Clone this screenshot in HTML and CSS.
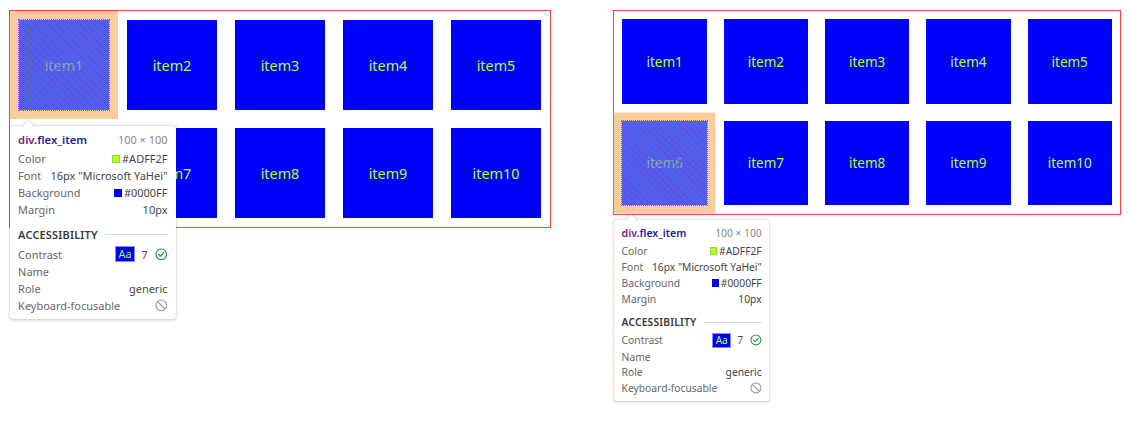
FILE: index.html
```html
<!DOCTYPE html>
<html lang="en">
<head>
<meta charset="utf-8">
<title>Flex items</title>
<link rel="stylesheet" href="styles.css">
</head>
<body>
<div class="stage">
  <div class="demo demo--left">
    <div class="flex_container">
      <div class="flex_item is-inspected"><span class="label">item1</span>
        <div class="tooltip">
          <div class="tt-title"><span class="tt-sel"><span class="tt-tag">div</span><span class="tt-cls">.flex_item</span></span><span class="tt-dim">100 × 100</span></div>
          <div class="tt-row"><span class="tt-key">Color</span><span class="tt-val"><i class="swatch swatch--green"></i>#ADFF2F</span></div>
          <div class="tt-row"><span class="tt-key">Font</span><span class="tt-val">16px "Microsoft YaHei"</span></div>
          <div class="tt-row"><span class="tt-key">Background</span><span class="tt-val"><i class="swatch swatch--blue"></i>#0000FF</span></div>
          <div class="tt-row"><span class="tt-key">Margin</span><span class="tt-val">10px</span></div>
          <div class="tt-section"><span>ACCESSIBILITY</span><i class="tt-rule"></i></div>
          <div class="tt-row tt-row--contrast"><span class="tt-key">Contrast</span><span class="tt-val"><span class="aa">Aa</span><span class="ratio">7</span><svg class="ico" viewBox="0 0 14 14" width="14" height="14"><circle cx="7" cy="7" r="5.9" fill="none" stroke="#1f9d3a" stroke-width="1.3"/><path d="M4.3 7.2 L6.2 9.1 L9.8 5.2" fill="none" stroke="#1f9d3a" stroke-width="1.4" stroke-linecap="round" stroke-linejoin="round"/></svg></span></div>
          <div class="tt-row"><span class="tt-key">Name</span><span class="tt-val"></span></div>
          <div class="tt-row"><span class="tt-key">Role</span><span class="tt-val">generic</span></div>
          <div class="tt-row"><span class="tt-key">Keyboard-focusable</span><span class="tt-val"><svg class="ico" viewBox="0 0 14 14" width="14" height="14"><circle cx="7" cy="7" r="5.9" fill="none" stroke="#9a9a9a" stroke-width="1.3"/><path d="M2.9 2.9 L11.1 11.1" stroke="#9a9a9a" stroke-width="1.3"/></svg></span></div>
        </div>
      </div>
      <div class="flex_item"><span class="label">item2</span></div>
      <div class="flex_item"><span class="label">item3</span></div>
      <div class="flex_item"><span class="label">item4</span></div>
      <div class="flex_item"><span class="label">item5</span></div>
      <div class="flex_item"><span class="label">item6</span></div>
      <div class="flex_item"><span class="label">item7</span></div>
      <div class="flex_item"><span class="label">item8</span></div>
      <div class="flex_item"><span class="label">item9</span></div>
      <div class="flex_item"><span class="label">item10</span></div>
    </div>
  </div>

  <div class="demo demo--right">
    <div class="flex_container">
      <div class="flex_item"><span class="label">item1</span></div>
      <div class="flex_item"><span class="label">item2</span></div>
      <div class="flex_item"><span class="label">item3</span></div>
      <div class="flex_item"><span class="label">item4</span></div>
      <div class="flex_item"><span class="label">item5</span></div>
      <div class="flex_item is-inspected"><span class="label">item6</span>
        <div class="tooltip">
          <div class="tt-title"><span class="tt-sel"><span class="tt-tag">div</span><span class="tt-cls">.flex_item</span></span><span class="tt-dim">100 × 100</span></div>
          <div class="tt-row"><span class="tt-key">Color</span><span class="tt-val"><i class="swatch swatch--green"></i>#ADFF2F</span></div>
          <div class="tt-row"><span class="tt-key">Font</span><span class="tt-val">16px "Microsoft YaHei"</span></div>
          <div class="tt-row"><span class="tt-key">Background</span><span class="tt-val"><i class="swatch swatch--blue"></i>#0000FF</span></div>
          <div class="tt-row"><span class="tt-key">Margin</span><span class="tt-val">10px</span></div>
          <div class="tt-section"><span>ACCESSIBILITY</span><i class="tt-rule"></i></div>
          <div class="tt-row tt-row--contrast"><span class="tt-key">Contrast</span><span class="tt-val"><span class="aa">Aa</span><span class="ratio">7</span><svg class="ico" viewBox="0 0 14 14" width="14" height="14"><circle cx="7" cy="7" r="5.9" fill="none" stroke="#1f9d3a" stroke-width="1.3"/><path d="M4.3 7.2 L6.2 9.1 L9.8 5.2" fill="none" stroke="#1f9d3a" stroke-width="1.4" stroke-linecap="round" stroke-linejoin="round"/></svg></span></div>
          <div class="tt-row"><span class="tt-key">Name</span><span class="tt-val"></span></div>
          <div class="tt-row"><span class="tt-key">Role</span><span class="tt-val">generic</span></div>
          <div class="tt-row"><span class="tt-key">Keyboard-focusable</span><span class="tt-val"><svg class="ico" viewBox="0 0 14 14" width="14" height="14"><circle cx="7" cy="7" r="5.9" fill="none" stroke="#9a9a9a" stroke-width="1.3"/><path d="M2.9 2.9 L11.1 11.1" stroke="#9a9a9a" stroke-width="1.3"/></svg></span></div>
        </div>
      </div>
      <div class="flex_item"><span class="label">item7</span></div>
      <div class="flex_item"><span class="label">item8</span></div>
      <div class="flex_item"><span class="label">item9</span></div>
      <div class="flex_item"><span class="label">item10</span></div>
    </div>
  </div>
</div>
</body>
</html>
```

FILE: styles.css
```css
html, body {
  margin: 0;
  padding: 0;
  background: #fff;
}

.stage {
  display: flex;
  align-items: flex-start;
  gap: 62px;
  padding: 10px 0 0 9px;
  min-height: 411px;
}

.demo--left { zoom: 0.9; }
.demo--right { zoom: 0.844; }

.flex_container {
  display: flex;
  flex-wrap: wrap;
  width: 600px;
  border: 1px solid #ff4040;
  position: relative;
}

.flex_item {
  position: relative;
  width: 100px;
  height: 100px;
  margin: 10px;
  background: #0000ff;
  color: #adff2f;
  font-family: "Noto Sans", "Open Sans", sans-serif;
  font-size: 16px;
  display: flex;
  align-items: center;
  justify-content: center;
}

/* DevTools highlight: content box + margin box */
.is-inspected::before {
  content: "";
  position: absolute;
  inset: 0;
  background: rgba(112, 138, 222, 0.7);
  outline: 1px dotted #a040ff;
  outline-offset: -1px;
  box-shadow: 0 0 0 10px rgba(246, 178, 107, 0.66);
}

/* flex item hatch (dashed diagonal lines) */
.is-inspected::after {
  content: "";
  position: absolute;
  inset: 1px;
  background: repeating-linear-gradient(45deg, transparent 0 4.6px, rgba(135, 45, 225, 0.6) 4.6px 6px);
  -webkit-mask-image: repeating-linear-gradient(-45deg, #000 0 3px, transparent 3px 5px);
  mask-image: repeating-linear-gradient(-45deg, #000 0 3px, transparent 3px 5px);
}

/* Inspector tooltip */
.tooltip {
  position: absolute;
  z-index: 10;
  left: -10px;
  top: 118px;
  width: 184px;
  box-sizing: border-box;
  padding: 4px 9px 6px;
  background: #fff;
  border-radius: 3px;
  box-shadow: 0 0 1px rgba(0, 0, 0, 0.3), 0 1px 4px rgba(0, 0, 0, 0.2);
  font-family: "Noto Sans", "Open Sans", sans-serif;
  font-size: 12.2px;
  color: #444;
  text-align: left;
}

.tooltip::before {
  content: "";
  position: absolute;
  left: 15px;
  top: -5px;
  width: 10px;
  height: 10px;
  background: #fff;
  transform: rotate(45deg);
  box-shadow: 0 0 1px rgba(0, 0, 0, 0.3), 0 0 3px rgba(0, 0, 0, 0.15);
  clip-path: polygon(-60% -60%, 160% -60%, -60% 160%);
}

.tt-title {
  display: flex;
  justify-content: space-between;
  align-items: center;
  height: 21px;
  margin-bottom: 2px;
}

.tt-sel { font-weight: 600; font-size: 12.5px; }
.tt-tag { color: #881280; }
.tt-cls { color: #1a1aa6; }
.tt-dim { color: #888; }

.tt-row {
  display: flex;
  justify-content: space-between;
  align-items: center;
  height: 18.8px;
}

.tt-row--contrast { height: 20px; }

.tt-key { color: #666; white-space: nowrap; }
.tt-val {
  color: #444;
  display: flex;
  align-items: center;
  white-space: nowrap;
}

.swatch {
  display: inline-block;
  width: 9px;
  height: 9px;
  margin-right: 2px;
  box-sizing: border-box;
  border: 1px solid rgba(0, 0, 0, 0.15);
}
.swatch--green { background: #adff2f; }
.swatch--blue { background: #0000ff; }

.tt-section {
  display: flex;
  align-items: center;
  height: 19px;
  margin-top: 9px;
  margin-bottom: 2px;
  font-weight: 600;
  color: #3a3a3a;
  letter-spacing: 0.2px;
}

.tt-rule {
  flex: 1;
  height: 1px;
  background: #ddd;
  margin-left: 8px;
}

.aa {
  display: inline-block;
  background: #0000ff;
  color: #adff2f;
  border: 1px solid #8a8aff;
  padding: 0 3px;
  line-height: 15px;
  font-size: 12px;
}

.ratio {
  margin: 0 8px 0 7px;
  color: #555;
}

.ico { display: block; }
```
